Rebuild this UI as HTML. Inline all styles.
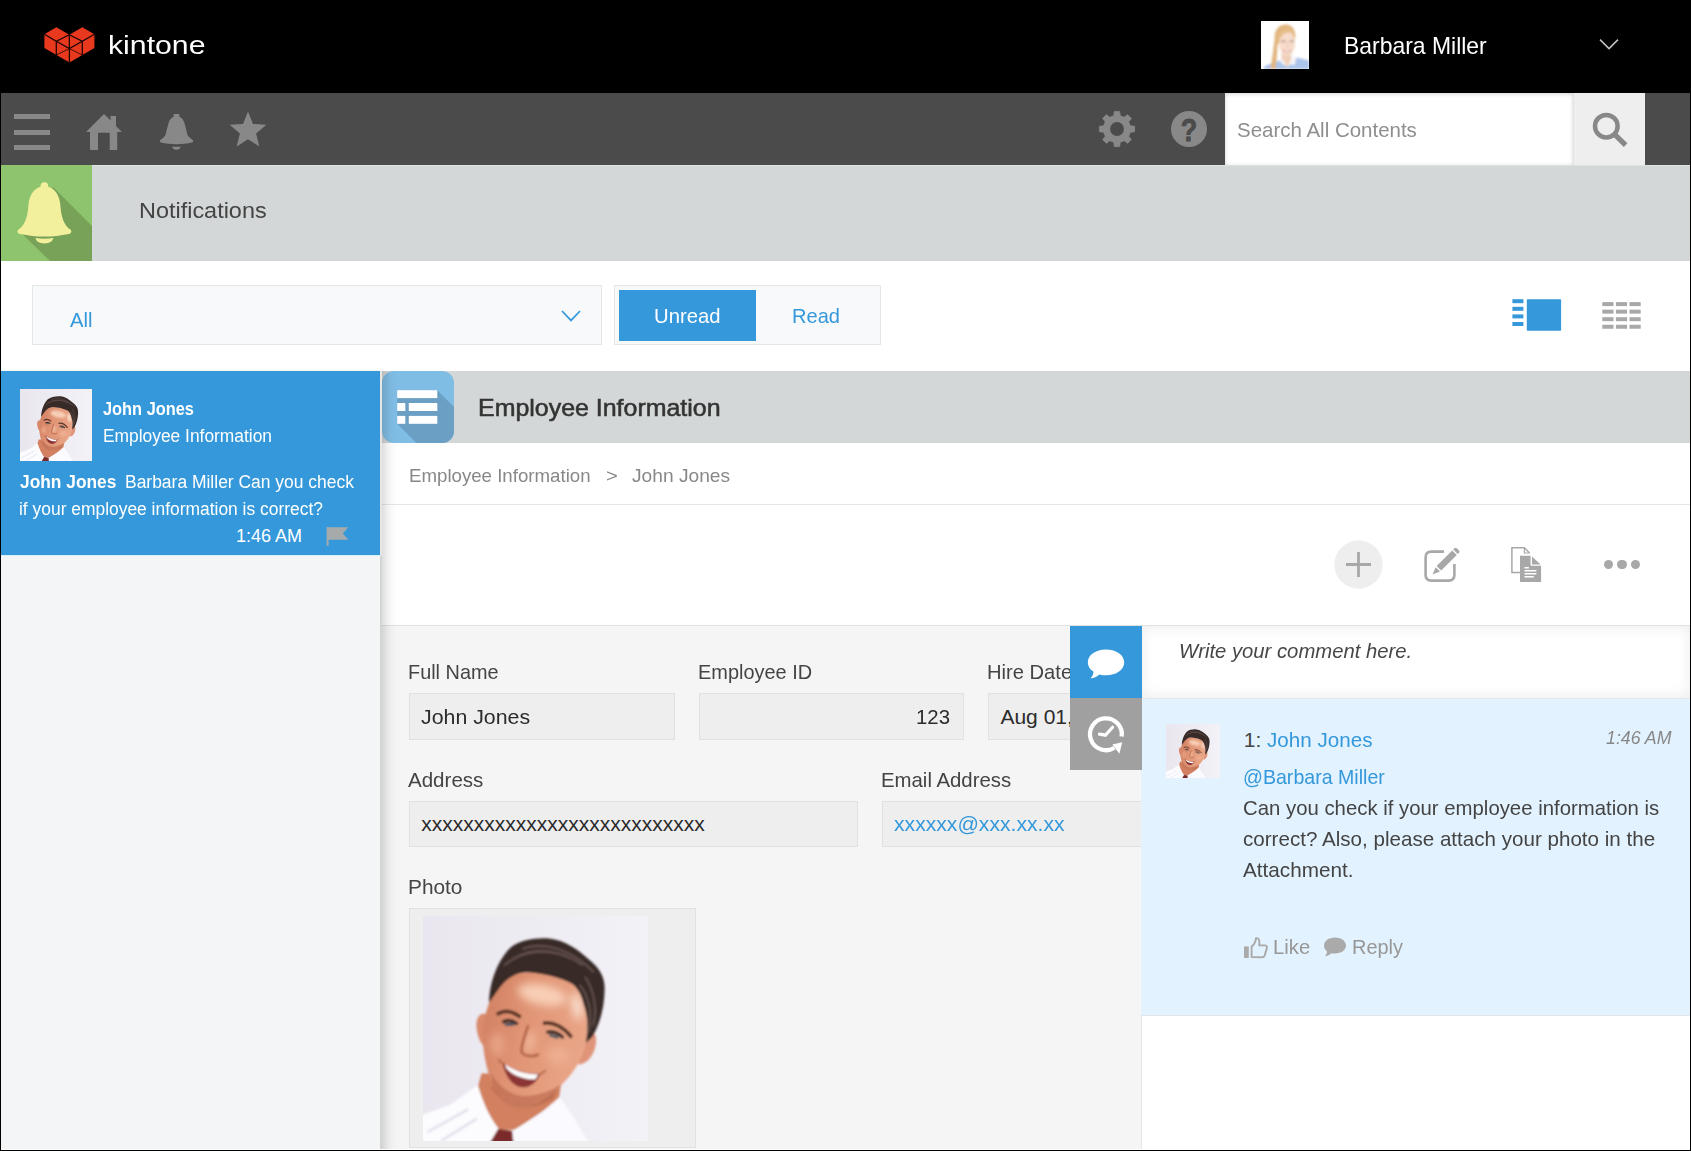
<!DOCTYPE html>
<html lang="en">
<head>
<meta charset="utf-8">
<title>kintone - Notifications</title>
<style>
html,body{margin:0;padding:0;background:#fff;}
body{width:1691px;height:1151px;overflow:hidden;font-family:"Liberation Sans",sans-serif;color:#333;}
#page{position:relative;width:1691px;height:1151px;overflow:hidden;background:#fff;}
#page div,#page svg{position:absolute;box-sizing:border-box;}
.t{white-space:nowrap;line-height:1;transform-origin:0 50%;}
.box{background:#eee;border:1px solid #e1e1e1;}
</style>
</head>
<body>
<div id="page">
<div style="left:0px;top:0px;width:1691px;height:93px;background:#000;"></div>
<svg style="left:43px;top:26px;" width="54" height="38" viewBox="0 0 54 38"><path d="M1.4 8.3 L13.3 1.3 L26.3 8.8 L39.3 1.3 L51.4 8.3 L51.4 22 L26.5 36.6 L1.4 22 Z" fill="#e8391f"/><g stroke="#1a0400" stroke-width="1.25" fill="none"><path d="M1.4 8.3 L13.3 15.2 L26.3 8.8 M13.3 15.2 L13.3 29"/><path d="M51.4 8.3 L39.3 15.2 L26.3 8.8 M39.3 15.2 L39.3 29"/><path d="M13.3 15.2 L26.4 22.6 L39.3 15.2 M26.4 22.6 L26.4 36.6 M26.3 8.8 L26.4 22.6"/><path d="M13.3 29 L26.4 22.6 L39.3 29" stroke-width=".8"/></g></svg>
<div class="t" style="top:31.97px;font-size:26.5px;color:#fff;left:107.54px;transform:scaleX(1.1405);">kintone</div>
<svg style="left:1261px;top:21px;" width="48" height="48" viewBox="0 0 48 48"><defs><filter id="bl1" x="-10%" y="-10%" width="120%" height="120%"><feGaussianBlur stdDeviation="0.9"/></filter><clipPath id="cpB"><rect width="48" height="48"/></clipPath></defs><rect width="48" height="48" fill="#fff"/><g clip-path="url(#cpB)"><g filter="url(#bl1)"><path d="M2.4 48 L4 45 L13 41.4 L21 38.6 L26 46 L31 42 L36 36.6 L48 39.4 L48 48 Z" fill="#abc4ea"/><path d="M20.6 31 L30.4 32 L30.4 39 L26 46.4 L20.4 38.6 Z" fill="#f0cfb9"/><path d="M29.6 33.4 L35 36.2 L33.8 44 L28.6 43 L30.6 38 Z" fill="#f6f6f9"/><path d="M21 37.6 L19 40.6 L23 44.6 L25 43 Z" fill="#f2f2f6"/><path d="M13.6 18 C13 9 18 3.4 25 3.6 C31 3.8 34.6 8.6 34.4 16 L33 21 L16.6 23 C16.4 32 15.6 41 14.4 48 L9.4 48 C11 38 12.6 28 13.6 18 Z" fill="#e2b680"/><ellipse cx="26" cy="22.4" rx="8.1" ry="12.2" fill="#f7dccb"/><path d="M16.6 21 C16 12 21 7 27.4 7.4 C31 7.6 33.4 10 34 14 C30 10.6 25 10.6 21.6 14 C19.6 16 18.4 19 18 23 Z" fill="#e6bd88"/><path d="M20.4 20.2 h4.4 M28.6 20.2 h4" stroke="#7d665c" stroke-width="1.1"/><path d="M26.4 22 v5" stroke="#e8bfa8" stroke-width="1"/><path d="M22.6 29.4 q3.6 3 7.4 0" stroke="#cf8880" stroke-width="1.5" fill="none"/><path d="M23.6 29.9 q2.6 1.6 5.4 0" stroke="#fff" stroke-width=".8" fill="none"/></g></g></svg>
<div class="t" style="top:33.88px;font-size:24px;color:#fff;left:1344.28px;transform:scaleX(0.9554);">Barbara Miller</div>
<svg style="left:1598px;top:37px;" width="22" height="16" viewBox="0 0 22 16"><path d="M2 2.6 L11 11.6 L20 2.6" fill="none" stroke="#c4c4c4" stroke-width="1.5"/></svg>
<div style="left:0px;top:93px;width:1691px;height:72px;background:#4b4b4b;"></div>
<div style="left:0px;top:93px;width:1px;height:72px;background:#000;"></div>
<div style="left:14px;top:114px;width:36px;height:5px;background:#888;"></div>
<div style="left:14px;top:129.5px;width:36px;height:5px;background:#888;"></div>
<div style="left:14px;top:145px;width:36px;height:5px;background:#888;"></div>
<svg style="left:86px;top:114px;" width="36" height="36" viewBox="0 0 36 36"><path fill="#888" d="M18 0 L24.6 6.6 V2 H30 V12 L36 18 H31.2 V36 H23.7 V18.7 H12 V36 H4 V18 H0 Z"/></svg>
<svg style="left:158px;top:113px;" width="37" height="38" viewBox="0 0 37 38"><path fill="#888" d="M15.7 1 H21.3 V3.8 C24 4.6 26 7.5 26.9 11.8 C27.8 15 28.4 17.4 28.8 19.3 C29.4 22 30.2 23.4 31.3 24.3 C32.8 25.6 34.4 26.4 35 27.4 C35.4 28.2 35.2 29 34.6 29.3 C29 30.8 24 31.2 18.5 31.2 C13 31.2 8 30.8 2.4 29.3 C1.8 29 1.6 28.2 2 27.4 C2.6 26.4 4.2 25.6 5.7 24.3 C6.8 23.4 7.6 22 8.2 19.3 C8.6 17.4 9.2 15 10.1 11.8 C11 7.5 13 4.6 15.7 3.8 Z"/><path fill="#888" d="M14 33.8 H22.8 C21.8 36 20.5 36.8 18.4 36.8 C16.3 36.8 15 36 14 33.8 Z"/></svg>
<svg style="left:228px;top:109px;" width="40" height="40" viewBox="0 0 40 40"><polygon fill="#888" points="20.00,2.50 25.00,14.92 38.36,15.84 28.08,24.43 31.34,37.41 20.00,30.30 8.66,37.41 11.92,24.43 1.64,15.84 15.00,14.92"/></svg>
<svg style="left:1097px;top:109px;" width="40" height="40" viewBox="0 0 40 40"><path fill="#888" stroke="#888" stroke-width=".8" stroke-linejoin="round" fill-rule="evenodd" d="M16.80 6.68 L17.34 2.40 L22.66 2.40 L23.20 6.68 L27.16 8.32 L30.56 5.67 L34.33 9.44 L31.68 12.84 L33.32 16.80 L37.60 17.34 L37.60 22.66 L33.32 23.20 L31.68 27.16 L34.33 30.56 L30.56 34.33 L27.16 31.68 L23.20 33.32 L22.66 37.60 L17.34 37.60 L16.80 33.32 L12.84 31.68 L9.44 34.33 L5.67 30.56 L8.32 27.16 L6.68 23.20 L2.40 22.66 L2.40 17.34 L6.68 16.80 L8.32 12.84 L5.67 9.44 L9.44 5.67 L12.84 8.32Z"/><circle cx="20" cy="20" r="6.9" fill="#4b4b4b"/></svg>
<svg style="left:1171px;top:111px;" width="36" height="36" viewBox="0 0 36 36"><circle cx="18" cy="18" r="18" fill="#888"/><text transform="translate(18,29.6) scale(.88,1)" text-anchor="middle" font-family="Liberation Sans, sans-serif" font-weight="700" font-size="30.5" fill="#4b4b4b" stroke="#4b4b4b" stroke-width=".9">?</text></svg>
<div style="left:1225px;top:93px;width:348px;height:72px;background:#fff;box-shadow:inset 0 1px 4px rgba(0,0,0,.18);"></div>
<div style="left:1573px;top:93px;width:72px;height:72px;background:#eee;border-left:1px solid #e3e3e3;"></div>
<div class="t" style="top:119.02px;font-size:21px;color:#8e8e8e;left:1236.85px;transform:scaleX(0.9751);">Search All Contents</div>
<svg style="left:1590px;top:109px;" width="40" height="40" viewBox="0 0 40 40"><circle cx="16.3" cy="17.2" r="11.3" fill="none" stroke="#888" stroke-width="4.5"/><path d="M24.6 25.4 L35.6 36.2" stroke="#888" stroke-width="5.2" stroke-linecap="butt"/></svg>
<div style="left:0px;top:165px;width:1691px;height:96px;background:#d4d7d7;"></div>
<div style="left:0px;top:165px;width:1691px;height:1px;background:#dfe2e2;"></div>
<svg style="left:1px;top:165px;" width="91" height="96" viewBox="0 0 91 96"><rect width="91" height="96" fill="#8fc46e"/><path d="M52 22 L91 61 L91 96 L49 96 L16 64 L30 70 Z" fill="#79a259"/><g transform="translate(16.4,16.4)"><path d="M27 .8 C29.6 .8 31.2 2.6 30.6 5 C38.5 7.6 42.3 15 43 24 C43.8 35 46 43.5 53.6 48.6 C54.4 50.6 53.6 52 51.4 52.6 C35 56 19 56 2.6 52.6 C.4 52 -.4 50.6 .4 48.6 C8 43.5 10.2 35 11 24 C11.7 15 15.5 7.6 23.4 5 C22.8 2.6 24.4 .8 27 .8 Z" fill="#f2f09c"/><path d="M18 56.6 C24 57.6 30 57.6 36 56.6 C35 60.4 31.6 62 27 62 C22.4 62 19 60.4 18 56.6 Z" fill="#f2f09c"/></g></svg>
<div style="left:0px;top:165px;width:1px;height:986px;background:#000;"></div>
<div class="t" style="top:200.25px;font-size:22.5px;color:#444;left:138.86px;transform:scaleX(1.0415);">Notifications</div>
<div style="left:32px;top:285px;width:570px;height:60px;background:#f7f9fa;border:1px solid #e3e7e8;"></div>
<div class="t" style="top:309.02px;font-size:21px;color:#3498db;left:69.55px;transform:scaleX(0.9621);">All</div>
<svg style="left:560px;top:309px;" width="22" height="15" viewBox="0 0 22 15"><path d="M2 2 L11 11.4 L20 2" fill="none" stroke="#3498db" stroke-width="1.7"/></svg>
<div style="left:614px;top:285px;width:267px;height:60px;background:#f7f9fa;border:1px solid #e3e7e8;"></div>
<div style="left:619px;top:290px;width:137px;height:51px;background:#3498db;"></div>
<div class="t" style="top:304.92px;font-size:21px;color:#fff;left:653.85px;transform:scaleX(0.9648);">Unread</div>
<div class="t" style="top:304.92px;font-size:21px;color:#3498db;left:791.85px;transform:scaleX(0.9552);">Read</div>
<svg style="left:1510px;top:297px;" width="54" height="38" viewBox="0 0 54 38"><rect x="2.4" y="2.20" width="11" height="4" fill="#3498db"/><rect x="2.4" y="9.80" width="11" height="4" fill="#3498db"/><rect x="2.4" y="17.40" width="11" height="4" fill="#3498db"/><rect x="2.4" y="25.00" width="11" height="4" fill="#3498db"/><rect x="16.8" y="2.2" width="34.3" height="31.6" rx=".8" fill="#3498db"/></svg>
<svg style="left:1600px;top:300px;" width="44" height="32" viewBox="0 0 44 32"><rect x="2.30" y="2.10" width="11.2" height="4" fill="#a8a8a8"/><rect x="15.90" y="2.10" width="11.2" height="4" fill="#a8a8a8"/><rect x="29.50" y="2.10" width="11.2" height="4" fill="#a8a8a8"/><rect x="2.30" y="9.65" width="11.2" height="4" fill="#a8a8a8"/><rect x="15.90" y="9.65" width="11.2" height="4" fill="#a8a8a8"/><rect x="29.50" y="9.65" width="11.2" height="4" fill="#a8a8a8"/><rect x="2.30" y="17.20" width="11.2" height="4" fill="#a8a8a8"/><rect x="15.90" y="17.20" width="11.2" height="4" fill="#a8a8a8"/><rect x="29.50" y="17.20" width="11.2" height="4" fill="#a8a8a8"/><rect x="2.30" y="24.75" width="11.2" height="4" fill="#a8a8a8"/><rect x="15.90" y="24.75" width="11.2" height="4" fill="#a8a8a8"/><rect x="29.50" y="24.75" width="11.2" height="4" fill="#a8a8a8"/></svg>
<div style="left:1px;top:370px;width:379px;height:781px;background:#f3f5f6;"></div>
<div style="left:1px;top:371px;width:379px;height:184px;background:#3498db;"></div>
<div style="left:1px;top:555px;width:379px;height:1px;background:#d6f1fb;"></div>
<svg width="0" height="0" style="left:0;top:0"><defs><filter id="blJ" x="-5%" y="-5%" width="110%" height="110%"><feGaussianBlur stdDeviation="0.55"/></filter><filter id="blS" x="-30%" y="-30%" width="160%" height="160%"><feGaussianBlur stdDeviation="1.8"/></filter><linearGradient id="bgJ" x1="0" y1="0" x2="1" y2="0"><stop offset="0" stop-color="#e9e6ef"/><stop offset="1" stop-color="#f3f2f7"/></linearGradient><linearGradient id="skJ" x1="0" y1="0" x2="1" y2="0.3"><stop offset="0" stop-color="#cf7d60"/><stop offset=".45" stop-color="#e09474"/><stop offset="1" stop-color="#e9a587"/></linearGradient></defs></svg>
<svg style="left:20px;top:389px;overflow:hidden" width="72" height="72" viewBox="0 0 100 100"><rect width="100" height="100" fill="url(#bgJ)"/><g filter="url(#blJ)"><path d="M-2 89 L12 84 L24.5 75 L31 82 L35 96 L33 102 L-2 102 Z" fill="#fcfcfe"/><path d="M60.5 80 L66 88 L74.5 102 L38 102 L40.5 95 L52 88 Z" fill="#fafaff"/><path d="M2 96 L20 86 M8 100 L24 90" stroke="#e4e2ee" stroke-width="1.2" fill="none"/><path d="M26 70 L24.5 75.5 C27 84 30 90 34 95 L40.5 95 C47 91 55 86 60.5 80.5 L62 70 Z" fill="#d2805f"/><path d="M30 76 C36 86 47 88 58 81 L60 75 Z" fill="#b9694d" opacity=".75"/><path d="M33.4 94.6 L39.6 95.6 L40.4 102 L29 102 Z" fill="#7a2b2a"/><path d="M29 44 C25 42 23 46 24 51 C24.6 55 26.4 58 28.6 58.6 Z" fill="#d98a6c"/><path d="M72.4 52 C77 49.6 78 55 76 60 C74.6 63.6 72 66 69 66 Z" fill="#e0947a"/><path d="M29.4 38.6 C31 31 38 25 46.3 25 C56 25 66 28 70 33 C73.5 40 74 48 72.5 56 C71 63 68 68.6 62 74.6 C56 80.6 49 85.6 42.6 85.4 C36.6 85 32.6 80 30.6 74.4 C28.4 68.6 26.6 60 26.6 54 C26.6 48 27.8 43 29.4 38.6 Z" fill="url(#skJ)"/><g filter="url(#blS)"><ellipse cx="53" cy="35" rx="11" ry="4.6" transform="rotate(12 53 35)" fill="#f8cfb6"/><ellipse cx="68.4" cy="40" rx="2.2" ry="6" transform="rotate(-8 68.4 40)" fill="#fbe3d4"/><ellipse cx="60" cy="62" rx="5" ry="4" fill="#eeae92"/><ellipse cx="33" cy="57" rx="3" ry="5" fill="#e9a487"/><ellipse cx="47.5" cy="56" rx="2" ry="5" transform="rotate(14 47.5 56)" fill="#f2b99d"/></g><path d="M30.6 74.4 C32.6 80 36.6 85 42.6 85.4 C49 85.6 56 80.6 62 74.6 C55 79 46 81.6 40 79 C36 77.2 32.6 74 30.4 70 Z" fill="#b7644a" opacity=".6"/><path d="M29.4 38.6 C29.4 30 33 20 38.6 14.3 C43 10.6 50 9.6 56 10 C63 10.6 69 15 74 19.6 C79 23.6 81 28 80.7 33 C80.6 40 79 47 75.4 53.6 L72.4 56.4 C73.4 50 73.4 44.6 71.5 39.5 C70.6 35.6 69 32 66 30 C60 27 53 25.4 46.3 25 C41 25 36.6 28 32.8 33.7 Z" fill="#382a28"/><path d="M36 22 C44 15 56 14 66 19 M40 19 C50 13 62 15 71 22 M44 14.6 C54 11 66 15 76 25 M72 27 C76 33 77.6 41 75.6 49 M69.6 30.6 C74 36 75.4 44 73.6 52" stroke="#66524e" stroke-width=".9" fill="none" opacity=".9"/><path d="M33.4 43.4 C36.4 41.6 40 42.4 42.8 44.6 M54 47.6 C58 47 62.6 49.6 65.6 53.4" stroke="#5a3527" stroke-width="1.7" fill="none" stroke-linecap="round"/><path d="M35.8 47 C37.8 46 40 46.6 41.6 47.8 M55.4 51.6 C57.6 51 60.4 52 62 53.8" stroke="#3d2a26" stroke-width="1.5" fill="none" stroke-linecap="round"/><path d="M36.4 48.2 h4 M56.2 52.8 l4 1.2" stroke="#4d5964" stroke-width="1.3"/><path d="M46.6 49 C45 54 43.4 58 43.8 60.6 C45.4 62.4 48.6 62.8 51 61.6" stroke="#b9694d" stroke-width="1.3" fill="none" stroke-linecap="round"/><path d="M35.2 65 C40 68.6 46.6 70.6 52.2 70 C50.4 74.6 46.8 76.8 43 76 C39 75 36.4 70.6 35.2 65 Z" fill="#8c3434"/><path d="M36.4 65.9 C41 69 46.6 70.6 51.2 70.3 L50 72.6 C45.4 73 39.6 71 37 67.6 Z" fill="#fdfdfd"/><path d="M33.6 63.6 C34 64.6 34.6 65 35.4 65.4 M52 70.2 C53 70 53.8 69.4 54.4 68.4" stroke="#b9694d" stroke-width=".9" fill="none"/></g></svg>
<div class="t" style="top:400.06px;font-size:18px;color:#fff;font-weight:700;left:103.21px;transform:scaleX(0.9096);">John Jones</div>
<div class="t" style="top:427.06px;font-size:18px;color:#fff;left:103.21px;transform:scaleX(0.9651);">Employee Information</div>
<div class="t" style="top:472.76px;font-size:18px;color:#fff;font-weight:700;left:19.61px;transform:scaleX(0.9636);">John Jones</div>
<div class="t" style="top:472.76px;font-size:18px;color:#fff;left:124.71px;transform:scaleX(0.9698);">Barbara Miller Can you check</div>
<div class="t" style="top:499.66px;font-size:18px;color:#fff;left:19.01px;transform:scaleX(0.9676);">if your employee information is correct?</div>
<div class="t" style="top:526.66px;font-size:18px;color:#fff;left:236.01px;">1:46 AM</div>
<svg style="left:325.8px;top:525.6px;" width="24" height="21" viewBox="0 0 24 21"><path d="M.6 .9 H2.6 V19.8 H.6 Z M2.6 1.3 H22.4 L16.8 7.5 L22.4 13.7 H2.6 Z" fill="#a6aaab"/></svg>
<div style="left:380px;top:371px;width:1311px;height:72px;background:#d4d7d7;"></div>
<svg style="left:382px;top:371px;" width="72" height="72" viewBox="0 0 72 72"><defs><clipPath id="cpA"><rect width="72" height="72" rx="12" ry="12"/></clipPath></defs><g clip-path="url(#cpA)"><rect width="72" height="72" fill="#80bde5"/><path d="M55.3 19.2 L72 35.9 V72 H34.4 L15.2 52.8 V23 Z" fill="#6b9fc4"/></g><g fill="#fff"><rect x="15.2" y="19.2" width="40.1" height="7.9"/><rect x="15.2" y="32" width="8.1" height="8"/><rect x="26.8" y="32" width="28.5" height="8"/><rect x="15.2" y="44.9" width="8.1" height="7.9"/><rect x="26.8" y="44.9" width="28.5" height="7.9"/></g></svg>
<div class="t" style="top:396.28px;font-size:24px;color:#333;left:477.98px;transform:scaleX(1.0389);-webkit-text-stroke:.55px #333;">Employee Information</div>
<div style="left:380px;top:443px;width:1311px;height:61px;background:#fff;"></div>
<div class="t" style="top:465.82px;font-size:19px;color:#888;left:408.75px;transform:scaleX(0.9823);">Employee Information</div>
<div class="t" style="top:465.82px;font-size:19px;color:#888;left:605.75px;transform:scaleX(1.0585);">&gt;</div>
<div class="t" style="top:465.82px;font-size:19px;color:#888;left:632.25px;transform:scaleX(1.0089);">John Jones</div>
<div style="left:380px;top:504px;width:1311px;height:1px;background:#e3e7e8;"></div>
<svg style="left:1334px;top:540px;" width="49" height="49" viewBox="0 0 49 49"><circle cx="24.5" cy="24.5" r="24.2" fill="#eee"/><path d="M12 24.5 H37 M24.5 12 V37" stroke="#a8a8a8" stroke-width="2.8"/></svg>
<svg style="left:1422px;top:545px;" width="40" height="40" viewBox="0 0 40 40"><path d="M22 6.6 H9.4 Q3.6 6.6 3.6 12.4 V29.8 Q3.6 35.6 9.4 35.6 H26.6 Q32.4 35.6 32.4 29.8 V19" fill="none" stroke="#a8a8a8" stroke-width="2.6"/><path d="M30.2 5.4 L34.8 10 L19.2 25.6 L14.6 21 Z M35.8 9 L31.2 4.4 L32.8 3 Q33.8 2.2 34.8 3.2 L37 5.4 Q38 6.4 37.2 7.4 Z M13.6 22.2 L18 26.6 L10.6 29.4 Z" fill="#a8a8a8"/></svg>
<svg style="left:1509px;top:545px;" width="34" height="39" viewBox="0 0 34 39"><path d="M11.2 27.5 H2.9 V2.7 H15.4 L20.6 8" fill="none" stroke="#a8a8a8" stroke-width="1.5"/><path d="M15.4 2.7 V8 H20.6" fill="none" stroke="#a8a8a8" stroke-width="1.2"/><path d="M11 10.8 H21.6 V20.8 H32.1 V36.9 H11 Z M23 11.4 L31.6 19.6 H23 Z" fill="#a8a8a8"/><path d="M15.5 22.7 H19.9 M15.5 25.7 H27.4 M15.5 28.7 H27.4 M15.5 31.7 H24.8" stroke="#fff" stroke-width="1.4"/></svg>
<div style="left:1603.7px;top:559.8px;width:9.2px;height:9.2px;background:#a8a8a8;border-radius:50%;"></div>
<div style="left:1617.4px;top:559.8px;width:9.2px;height:9.2px;background:#a8a8a8;border-radius:50%;"></div>
<div style="left:1631.1000000000001px;top:559.8px;width:9.2px;height:9.2px;background:#a8a8a8;border-radius:50%;"></div>
<div style="left:380px;top:625px;width:1311px;height:1px;background:#dfe2e3;"></div>
<div style="left:380px;top:626px;width:762px;height:525px;background:#f5f5f5;"></div>
<div class="t" style="top:661.12px;font-size:21px;color:#444;left:408.45px;transform:scaleX(0.9463);">Full Name</div>
<div class="t" style="top:661.12px;font-size:21px;color:#444;left:697.75px;transform:scaleX(0.9495);">Employee ID</div>
<div class="t" style="top:661.12px;font-size:21px;color:#444;left:987.35px;transform:scaleX(0.9600);">Hire Date</div>
<div class="box" style="left:409px;top:693px;width:266px;height:47px"></div>
<div class="box" style="left:699px;top:693px;width:265px;height:47px"></div>
<div class="box" style="left:988px;top:693px;width:200px;height:47px"></div>
<div class="t" style="top:706.02px;font-size:21px;color:#2b2b2b;left:421.45px;transform:scaleX(1.0162);">John Jones</div>
<div class="t" style="top:706.02px;font-size:21px;color:#2b2b2b;right:740.80px;transform-origin:100% 50%;transform:scaleX(0.9703);">123</div>
<div class="t" style="top:706.02px;font-size:21px;color:#2b2b2b;left:1000.45px;">Aug 01, 2010</div>
<div class="t" style="top:768.62px;font-size:21px;color:#444;left:408.45px;transform:scaleX(0.9781);">Address</div>
<div class="t" style="top:768.62px;font-size:21px;color:#444;left:880.64px;transform:scaleX(0.9696);">Email Address</div>
<div class="box" style="left:409px;top:801px;width:449px;height:46px"></div>
<div class="box" style="left:882px;top:801px;width:300px;height:46px"></div>
<div class="t" style="top:812.92px;font-size:21px;color:#2b2b2b;left:421.15px;">xxxxxxxxxxxxxxxxxxxxxxxxxxx</div>
<div class="t" style="top:812.92px;font-size:21px;color:#3498db;left:893.85px;transform:scaleX(1.0063);">xxxxxx@xxx.xx.xx</div>
<div class="t" style="top:875.62px;font-size:21px;color:#444;left:408.45px;transform:scaleX(0.9922);">Photo</div>
<div class="box" style="left:409px;top:908px;width:287px;height:240px"></div>
<svg style="left:423px;top:916px;overflow:hidden" width="225" height="225" viewBox="0 0 100 100"><rect width="100" height="100" fill="url(#bgJ)"/><g filter="url(#blJ)"><path d="M-2 89 L12 84 L24.5 75 L31 82 L35 96 L33 102 L-2 102 Z" fill="#fcfcfe"/><path d="M60.5 80 L66 88 L74.5 102 L38 102 L40.5 95 L52 88 Z" fill="#fafaff"/><path d="M2 96 L20 86 M8 100 L24 90" stroke="#e4e2ee" stroke-width="1.2" fill="none"/><path d="M26 70 L24.5 75.5 C27 84 30 90 34 95 L40.5 95 C47 91 55 86 60.5 80.5 L62 70 Z" fill="#d2805f"/><path d="M30 76 C36 86 47 88 58 81 L60 75 Z" fill="#b9694d" opacity=".75"/><path d="M33.4 94.6 L39.6 95.6 L40.4 102 L29 102 Z" fill="#7a2b2a"/><path d="M29 44 C25 42 23 46 24 51 C24.6 55 26.4 58 28.6 58.6 Z" fill="#d98a6c"/><path d="M72.4 52 C77 49.6 78 55 76 60 C74.6 63.6 72 66 69 66 Z" fill="#e0947a"/><path d="M29.4 38.6 C31 31 38 25 46.3 25 C56 25 66 28 70 33 C73.5 40 74 48 72.5 56 C71 63 68 68.6 62 74.6 C56 80.6 49 85.6 42.6 85.4 C36.6 85 32.6 80 30.6 74.4 C28.4 68.6 26.6 60 26.6 54 C26.6 48 27.8 43 29.4 38.6 Z" fill="url(#skJ)"/><g filter="url(#blS)"><ellipse cx="53" cy="35" rx="11" ry="4.6" transform="rotate(12 53 35)" fill="#f8cfb6"/><ellipse cx="68.4" cy="40" rx="2.2" ry="6" transform="rotate(-8 68.4 40)" fill="#fbe3d4"/><ellipse cx="60" cy="62" rx="5" ry="4" fill="#eeae92"/><ellipse cx="33" cy="57" rx="3" ry="5" fill="#e9a487"/><ellipse cx="47.5" cy="56" rx="2" ry="5" transform="rotate(14 47.5 56)" fill="#f2b99d"/></g><path d="M30.6 74.4 C32.6 80 36.6 85 42.6 85.4 C49 85.6 56 80.6 62 74.6 C55 79 46 81.6 40 79 C36 77.2 32.6 74 30.4 70 Z" fill="#b7644a" opacity=".6"/><path d="M29.4 38.6 C29.4 30 33 20 38.6 14.3 C43 10.6 50 9.6 56 10 C63 10.6 69 15 74 19.6 C79 23.6 81 28 80.7 33 C80.6 40 79 47 75.4 53.6 L72.4 56.4 C73.4 50 73.4 44.6 71.5 39.5 C70.6 35.6 69 32 66 30 C60 27 53 25.4 46.3 25 C41 25 36.6 28 32.8 33.7 Z" fill="#382a28"/><path d="M36 22 C44 15 56 14 66 19 M40 19 C50 13 62 15 71 22 M44 14.6 C54 11 66 15 76 25 M72 27 C76 33 77.6 41 75.6 49 M69.6 30.6 C74 36 75.4 44 73.6 52" stroke="#66524e" stroke-width=".9" fill="none" opacity=".9"/><path d="M33.4 43.4 C36.4 41.6 40 42.4 42.8 44.6 M54 47.6 C58 47 62.6 49.6 65.6 53.4" stroke="#5a3527" stroke-width="1.7" fill="none" stroke-linecap="round"/><path d="M35.8 47 C37.8 46 40 46.6 41.6 47.8 M55.4 51.6 C57.6 51 60.4 52 62 53.8" stroke="#3d2a26" stroke-width="1.5" fill="none" stroke-linecap="round"/><path d="M36.4 48.2 h4 M56.2 52.8 l4 1.2" stroke="#4d5964" stroke-width="1.3"/><path d="M46.6 49 C45 54 43.4 58 43.8 60.6 C45.4 62.4 48.6 62.8 51 61.6" stroke="#b9694d" stroke-width="1.3" fill="none" stroke-linecap="round"/><path d="M35.2 65 C40 68.6 46.6 70.6 52.2 70 C50.4 74.6 46.8 76.8 43 76 C39 75 36.4 70.6 35.2 65 Z" fill="#8c3434"/><path d="M36.4 65.9 C41 69 46.6 70.6 51.2 70.3 L50 72.6 C45.4 73 39.6 71 37 67.6 Z" fill="#fdfdfd"/><path d="M33.6 63.6 C34 64.6 34.6 65 35.4 65.4 M52 70.2 C53 70 53.8 69.4 54.4 68.4" stroke="#b9694d" stroke-width=".9" fill="none"/></g></svg>
<div style="left:382px;top:371px;width:17px;height:779px;background:linear-gradient(to right,rgba(0,0,0,.13) 0,rgba(0,0,0,.09) 3px,rgba(0,0,0,.055) 6px,rgba(0,0,0,.028) 9px,rgba(0,0,0,.01) 12px,rgba(0,0,0,0) 16px);"></div>
<div style="left:380px;top:371px;width:2px;height:185px;background:#e7e6e5;"></div>
<div style="left:380px;top:556px;width:2px;height:595px;background:#d3d4d4;"></div>
<div style="left:1141px;top:626px;width:550px;height:525px;background:#fff;border-left:1px solid #e3e7e8;"></div>
<div style="left:1141px;top:626px;width:550px;height:73px;background:#fff;box-shadow:inset 0 0 15px rgba(0,0,0,.085);border-bottom:1px solid #e3e7e8;"></div>
<div class="t" style="top:640.32px;font-size:21px;color:#474747;font-style:italic;left:1178.64px;transform:scaleX(0.9651);">Write your comment here.</div>
<div style="left:1141px;top:699px;width:550px;height:317px;background:#e2f2fe;border-bottom:1px solid #e3e7e8;"></div>
<svg style="left:1166px;top:724px;overflow:hidden" width="54" height="54" viewBox="0 0 100 100"><rect width="100" height="100" fill="url(#bgJ)"/><g filter="url(#blJ)"><path d="M-2 89 L12 84 L24.5 75 L31 82 L35 96 L33 102 L-2 102 Z" fill="#fcfcfe"/><path d="M60.5 80 L66 88 L74.5 102 L38 102 L40.5 95 L52 88 Z" fill="#fafaff"/><path d="M2 96 L20 86 M8 100 L24 90" stroke="#e4e2ee" stroke-width="1.2" fill="none"/><path d="M26 70 L24.5 75.5 C27 84 30 90 34 95 L40.5 95 C47 91 55 86 60.5 80.5 L62 70 Z" fill="#d2805f"/><path d="M30 76 C36 86 47 88 58 81 L60 75 Z" fill="#b9694d" opacity=".75"/><path d="M33.4 94.6 L39.6 95.6 L40.4 102 L29 102 Z" fill="#7a2b2a"/><path d="M29 44 C25 42 23 46 24 51 C24.6 55 26.4 58 28.6 58.6 Z" fill="#d98a6c"/><path d="M72.4 52 C77 49.6 78 55 76 60 C74.6 63.6 72 66 69 66 Z" fill="#e0947a"/><path d="M29.4 38.6 C31 31 38 25 46.3 25 C56 25 66 28 70 33 C73.5 40 74 48 72.5 56 C71 63 68 68.6 62 74.6 C56 80.6 49 85.6 42.6 85.4 C36.6 85 32.6 80 30.6 74.4 C28.4 68.6 26.6 60 26.6 54 C26.6 48 27.8 43 29.4 38.6 Z" fill="url(#skJ)"/><g filter="url(#blS)"><ellipse cx="53" cy="35" rx="11" ry="4.6" transform="rotate(12 53 35)" fill="#f8cfb6"/><ellipse cx="68.4" cy="40" rx="2.2" ry="6" transform="rotate(-8 68.4 40)" fill="#fbe3d4"/><ellipse cx="60" cy="62" rx="5" ry="4" fill="#eeae92"/><ellipse cx="33" cy="57" rx="3" ry="5" fill="#e9a487"/><ellipse cx="47.5" cy="56" rx="2" ry="5" transform="rotate(14 47.5 56)" fill="#f2b99d"/></g><path d="M30.6 74.4 C32.6 80 36.6 85 42.6 85.4 C49 85.6 56 80.6 62 74.6 C55 79 46 81.6 40 79 C36 77.2 32.6 74 30.4 70 Z" fill="#b7644a" opacity=".6"/><path d="M29.4 38.6 C29.4 30 33 20 38.6 14.3 C43 10.6 50 9.6 56 10 C63 10.6 69 15 74 19.6 C79 23.6 81 28 80.7 33 C80.6 40 79 47 75.4 53.6 L72.4 56.4 C73.4 50 73.4 44.6 71.5 39.5 C70.6 35.6 69 32 66 30 C60 27 53 25.4 46.3 25 C41 25 36.6 28 32.8 33.7 Z" fill="#382a28"/><path d="M36 22 C44 15 56 14 66 19 M40 19 C50 13 62 15 71 22 M44 14.6 C54 11 66 15 76 25 M72 27 C76 33 77.6 41 75.6 49 M69.6 30.6 C74 36 75.4 44 73.6 52" stroke="#66524e" stroke-width=".9" fill="none" opacity=".9"/><path d="M33.4 43.4 C36.4 41.6 40 42.4 42.8 44.6 M54 47.6 C58 47 62.6 49.6 65.6 53.4" stroke="#5a3527" stroke-width="1.7" fill="none" stroke-linecap="round"/><path d="M35.8 47 C37.8 46 40 46.6 41.6 47.8 M55.4 51.6 C57.6 51 60.4 52 62 53.8" stroke="#3d2a26" stroke-width="1.5" fill="none" stroke-linecap="round"/><path d="M36.4 48.2 h4 M56.2 52.8 l4 1.2" stroke="#4d5964" stroke-width="1.3"/><path d="M46.6 49 C45 54 43.4 58 43.8 60.6 C45.4 62.4 48.6 62.8 51 61.6" stroke="#b9694d" stroke-width="1.3" fill="none" stroke-linecap="round"/><path d="M35.2 65 C40 68.6 46.6 70.6 52.2 70 C50.4 74.6 46.8 76.8 43 76 C39 75 36.4 70.6 35.2 65 Z" fill="#8c3434"/><path d="M36.4 65.9 C41 69 46.6 70.6 51.2 70.3 L50 72.6 C45.4 73 39.6 71 37 67.6 Z" fill="#fdfdfd"/><path d="M33.6 63.6 C34 64.6 34.6 65 35.4 65.4 M52 70.2 C53 70 53.8 69.4 54.4 68.4" stroke="#b9694d" stroke-width=".9" fill="none"/></g></svg>
<div class="t" style="top:728.62px;font-size:21px;color:#444;left:1243.75px;">1:</div>
<div class="t" style="top:728.62px;font-size:21px;color:#3498db;left:1266.55px;transform:scaleX(0.9818);">John Jones</div>
<div class="t" style="top:729.26px;font-size:18px;color:#888;font-style:italic;left:1605.61px;transform:scaleX(0.9867);">1:46 AM</div>
<div class="t" style="top:765.72px;font-size:21px;color:#3498db;left:1243.14px;transform:scaleX(0.9331);">@Barbara Miller</div>
<div class="t" style="top:797.02px;font-size:21px;color:#444;left:1242.85px;transform:scaleX(0.9688);">Can you check if your employee information is</div>
<div class="t" style="top:828.42px;font-size:21px;color:#444;left:1242.85px;transform:scaleX(0.9807);">correct? Also, please attach your photo in the</div>
<div class="t" style="top:859.12px;font-size:21px;color:#444;left:1242.85px;transform:scaleX(0.9857);">Attachment.</div>
<svg style="left:1243px;top:936px;" width="26" height="24" viewBox="0 0 26 24"><path d="M1 10.4 H5.8 V22 H1 Z" fill="#aaa"/><path d="M8.6 21 V10.6 C11.6 8.4 12.6 5.6 13 2.2 C15.8 1.6 17 4 16.2 9.4 H22 Q24.6 9.8 23.8 12.4 L21.6 19.6 Q21 21.2 19.2 21.2 Z" fill="none" stroke="#aaa" stroke-width="1.9" stroke-linejoin="round"/></svg>
<div class="t" style="top:935.62px;font-size:21px;color:#979797;left:1273.35px;transform:scaleX(0.9644);">Like</div>
<svg style="left:1323px;top:936px;" width="24" height="22" viewBox="0 0 24 22"><path d="M12 1.6 C18.4 1.6 23 5.2 23 9.6 C23 14 18.4 17.6 12 17.6 C10.6 17.6 9.4 17.4 8.2 17.2 C6.6 19 4.4 20 1.8 20.2 C3.4 18.8 4 17.2 4 15.4 C2 14 1 11.8 1 9.6 C1 5.2 5.6 1.6 12 1.6 Z" fill="#aaa"/></svg>
<div class="t" style="top:935.62px;font-size:21px;color:#979797;left:1351.75px;transform:scaleX(0.9490);">Reply</div>
<div style="left:1070px;top:626px;width:72px;height:72px;background:#3498db;"></div>
<svg style="left:1070px;top:626px;" width="72" height="72" viewBox="0 0 72 72"><path d="M36 23.6 C46.4 23.6 54.2 29.2 54.2 36.4 C54.2 43.6 46.4 49.2 36 49.2 C33.6 49.2 31.4 49 29.4 48.4 C27 50.6 23.8 52 20.4 52.2 C22.6 50.2 23.6 47.8 23.4 45.4 C19.8 43.2 17.8 40 17.8 36.4 C17.8 29.2 25.6 23.6 36 23.6 Z" fill="#fff"/></svg>
<div style="left:1070px;top:698px;width:72px;height:72px;background:#a0a0a0;"></div>
<svg style="left:1070px;top:698px;" width="72" height="72" viewBox="0 0 72 72"><path d="M51.65 38.5 A15.9 15.9 0 1 0 44.4 49.7" fill="none" stroke="#fff" stroke-width="4.3"/><path d="M52.2 44.2 L42.4 46.6 L49.4 55.8 Z" fill="#fff"/><path d="M35.4 37.2 L42.6 29.2 M35.4 37.2 L29.4 36.2" stroke="#fff" stroke-width="3.2" stroke-linecap="round"/></svg>
<div style="left:1690px;top:0px;width:1px;height:1151px;background:#000;"></div>
<div style="left:0px;top:1150px;width:1691px;height:1px;background:#000;"></div>
<div style="left:1px;top:1149px;width:1689px;height:1px;background:#fff;"></div>
</div>
</body>
</html>
